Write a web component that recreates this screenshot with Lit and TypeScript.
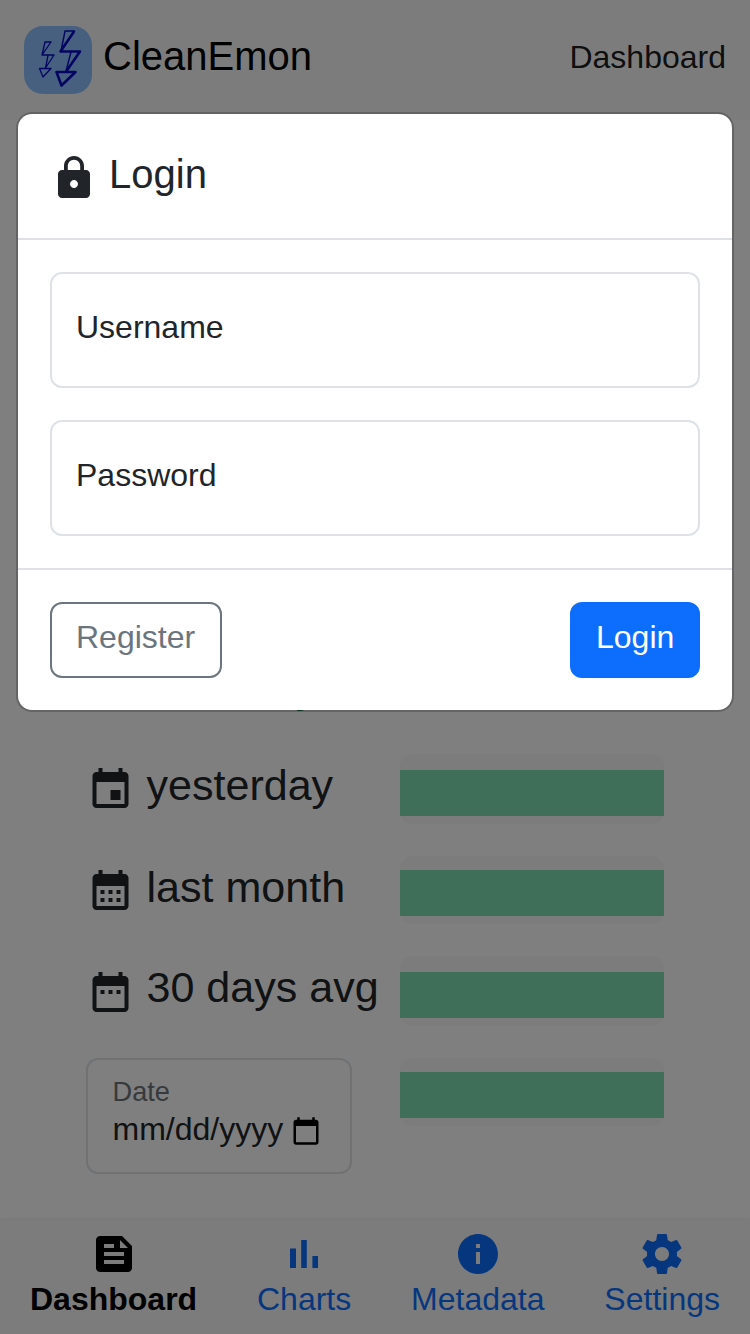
import { LitElement, html, css, svg } from "lit";
import { customElement } from "lit/decorators.js";

const ICONS: Record<string, string> = {
  lock: "M18 8h-1V6c0-2.76-2.24-5-5-5S7 3.24 7 6v2H6c-1.1 0-2 .9-2 2v10c0 1.1.9 2 2 2h12c1.1 0 2-.9 2-2V10c0-1.1-.9-2-2-2zm-6 9c-1.1 0-2-.9-2-2s.9-2 2-2 2 .9 2 2-.9 2-2 2zm3.1-9H8.900V6c0-1.710 1.390-3.100 3.100-3.100 1.710 0 3.100 1.390 3.100 3.100v2z",
  yesterday: "M17 12h-5v5h5v-5zM16 1v2H8V1H6v2H5c-1.110 0-1.990.9-1.990 2L3 19c0 1.100.89 2 2 2h14c1.100 0 2-.9 2-2V5c0-1.100-.9-2-2-2h-1V1h-2zm3 18H5V8h14v11z",
  month: "M19 4h-1V2h-2v2H8V2H6v2H5c-1.110 0-1.990.9-1.990 2L3 20c0 1.100.89 2 2 2h14c1.100 0 2-.9 2-2V6c0-1.100-.9-2-2-2zm0 16H5V10h14v10zM9 14H7v-2h2v2zm4 0h-2v-2h2v2zm4 0h-2v-2h2v2zm-8 4H7v-2h2v2zm4 0h-2v-2h2v2zm4 0h-2v-2h2v2z",
  range: "M9 11H7v2h2v-2zm4 0h-2v2h2v-2zm4 0h-2v2h2v-2zm2-7h-1V2h-2v2H8V2H6v2H5c-1.110 0-1.990.9-1.990 2L3 20c0 1.100.89 2 2 2h14c1.100 0 2-.9 2-2V6c0-1.100-.9-2-2-2zm0 16H5V9h14v11z",
  picker: "M20 3h-1V1h-2v2H7V1H5v2H4c-1.100 0-2 .9-2 2v16c0 1.100.9 2 2 2h16c1.100 0 2-.9 2-2V5c0-1.100-.9-2-2-2zm0 18H4V8h16v13z",
  feed: "M16 3H5c-1.100 0-2 .9-2 2v14c0 1.100.9 2 2 2h14c1.100 0 2-.9 2-2V8l-5-5zM7 7h5v2H7V7zm10 10H7v-2h10v2zm0-4H7v-2h10v2zm-2-4V5l4 4h-4z",
  charts: "M5 9.200h3V19H5zM10.600 5h2.800v14h-2.800zm5.600 8H19v6h-2.800z",
  info: "M12 2C6.480 2 2 6.480 2 12s4.480 10 10 10 10-4.480 10-10S17.520 2 12 2zm1 15h-2v-6h2v6zm0-8h-2V7h2v2z",
  settings: "M19.430 12.980c.04-.32.07-.64.07-.98s-.03-.66-.07-.98l2.110-1.650c.19-.15.24-.42.12-.64l-2-3.460c-.12-.22-.39-.3-.61-.22l-2.490 1c-.52-.4-1.080-.73-1.690-.98l-.38-2.650C14.460 2.180 14.250 2 14 2h-4c-.25 0-.46.18-.49.42l-.38 2.650c-.61.25-1.170.59-1.690.98l-2.490-1c-.23-.09-.49 0-.61.22l-2 3.460c-.13.22-.07.49.12.64l2.110 1.650c-.04.32-.07.65-.07.98s.03.66.07.98l-2.110 1.650c-.19.15-.24.42-.12.64l2 3.460c.12.22.39.3.61.22l2.490-1c.52.4 1.080.73 1.690.98l.38 2.650c.03.24.24.42.49.42h4c.25 0 .46-.18.49-.42l.38-2.650c.61-.25 1.170-.59 1.690-.98l2.490 1c.23.09.49 0 .61-.22l2-3.460c.12-.22.07-.49-.12-.64l-2.110-1.650zM12 15.500c-1.930 0-3.500-1.570-3.500-3.500s1.570-3.500 3.500-3.500 3.500 1.570 3.500 3.500-1.570 3.500-3.500 3.500z",
};

const icon = (name: string, cls = "") =>
  html`<svg class="icon ${cls}" viewBox="0 0 24 24" fill="currentColor" aria-hidden="true">${svg`<path fill-rule="evenodd" d=${ICONS[name]}></path>`}</svg>`;

const PERIODS = [
  { name: "yesterday", icon: "yesterday", cls: "r1" },
  { name: "last month", icon: "month", cls: "r2" },
  { name: "30 days avg", icon: "range", cls: "r3" },
];

const TABS = [
  { name: "Dashboard", icon: "feed", cls: "active" },
  { name: "Charts", icon: "charts", cls: "" },
  { name: "Metadata", icon: "info", cls: "" },
  { name: "Settings", icon: "settings", cls: "" },
];

@customElement("app-root")
export class AppRoot extends LitElement {
  static styles = css`
    :host {
      display: block;
      position: relative;
      height: 1334px;
      overflow: hidden;
      background: #fff;
      color: #212529;
      font: 32px/48px "Liberation Sans", Arial, sans-serif;
    }
    * { box-sizing: border-box; }
    .icon { display: block; width: 48px; height: 48px; flex: none; }
    .page { height: 100%; display: flex; flex-direction: column; }
    .top {
      height: 120px; flex: none;
      display: flex; align-items: center;
      padding: 0 24px;
      background: #f8f9fa;
      color: rgba(0, 0, 0, 0.9);
    }
    .logo { width: 68px; height: 68px; flex: none; display: block; }
    .brand { font-size: 40px; line-height: 60px; margin: -8px auto 0 11px; color: #000; }
    .crumb { margin-top: -6px; }
    .content {
      flex: 1; display: flex; flex-direction: column;
      padding: 536px 86px 0;
      font-size: 43.05px;
    }
    .today {
      height: 98px; padding-left: 108px; white-space: nowrap;
      color: #198754; line-height: 52px; font-size: 52px;
    }
    .row { height: 101px; display: flex; flex: none; }
    .label { width: 314px; display: flex; white-space: nowrap; line-height: 62px; }
    .label.r2 { line-height: 64px; }
    .label .icon { width: 49px; height: 48px; margin: 12px 11.500px 0 0; }
    .label.r2 .icon { margin-top: 12px; }
    .slot {
      width: 264px; height: 70px; border-radius: 12px;
      background: #f8f9fa; padding-top: 16px;
    }
    .slot.r2 { height: 68px; margin-top: 1px; padding-top: 14px; }
    .label.r2 .icon { margin-top: 11px; }
    .slot.r4 { padding-top: 14px; height: 68px; margin-top: 1px; }
    .bar { height: 46px; background: #7fdfb0; }
    .date {
      width: 266px; height: 116px; margin: 1px 48px 0 0;
      border: 2px solid #dee2e6; border-radius: 12px;
      padding: 12px 24px 12px 24.500px; font-size: 32px; line-height: 40px;
    }
    .date .small { font-size: 27.2px; line-height: 40px; color: #6f7479; }
    .value { display: flex; align-items: center; height: 36px; margin-top: -1px; white-space: nowrap; }
    .value .icon { width: 30px; height: 30px; margin: 4px 0 0 7.500px; color: #000; }
    .tabs {
      height: 114px; flex: none;
      display: flex; justify-content: space-between;
      padding: 10px 30px 0 30px;
      background: #f8f9fa;
      box-shadow: 0 0 4px rgba(0, 0, 0, 0.12);
      color: #0d6efd;
    }
    .tab { display: flex; flex-direction: column; align-items: center; line-height: 42px; }
    .tab.active { color: #000; font-weight: 700; }
    .backdrop {
      position: absolute; inset: 0;
      background: rgba(0, 0, 0, 0.5);
      padding: 112px 16px 0;
    }
    .modal {
      width: 718px; height: 600px;
      border: 2px solid rgba(0, 0, 0, 0.2);
      border-radius: 16px;
      background: #fff; background-clip: padding-box;
    }
    .head {
      height: 126px; border-bottom: 2px solid #dee2e6;
      padding: 30px 32px 0; display: flex;
      font-size: 40px; line-height: 60px;
    }
    .head .icon { margin: 10px 11px 0 0; }
    .fields { padding: 32px; display: flex; flex-direction: column; gap: 32px; }
    .field {
      height: 116px; border: 2px solid #dee2e6; border-radius: 12px;
      padding: 29px 24px;
    }
    .foot {
      border-top: 2px solid #dee2e6; padding: 32px;
      display: flex; justify-content: space-between;
    }
    .btn {
      height: 76px; border: 2px solid #6c757d; border-radius: 12px;
      padding: 0 24px 6px; background: transparent; text-align: left;
      font: inherit; line-height: 66px; color: #6c757d;
    }
    .btn.outline { width: 172px; }
    .btn.primary { width: 130px; background: #0d6efd; border-color: #0d6efd; color: #fff; }
  `;

  render() {
    return html`
      <div class="page">
        <header class="top">
          <svg class="logo" viewBox="0 0 68 68" aria-hidden="true">
            <rect width="68" height="68" rx="19" fill="#8fc1ff"></rect>
            <g fill="none" stroke="#0909c4" stroke-linejoin="round" stroke-linecap="round">
              <path stroke-width="1.400" d="M50 5H41L37 25M47 26L42 45"></path>
              <path stroke-width="2.600" d="M50 5.500L36.500 25.500H56L42.500 45"></path>
              <path stroke-width="2.600" d="M32.500 46H51.500L37.500 59.500Z"></path>
              <path stroke-width="1.300" d="M21 16H27L18 29H30L21.500 42L24 29.500M21 16L18 29M15.500 42.500H27L19 51Z"></path>
            </g>
          </svg>
          <span class="brand">CleanEmon</span>
          <span class="crumb">Dashboard</span>
        </header>
        <main class="content">
          <div class="today">today</div>
          ${PERIODS.map((p) => html`
            <div class="row">
              <div class="label ${p.cls}">${icon(p.icon)}<span>${p.name}</span></div>
              <div class="slot ${p.cls}"><div class="bar"></div></div>
            </div>`)}
          <div class="row">
            <div class="date">
              <div class="small">Date</div>
              <div class="value"><span>mm/dd/yyyy</span>${icon("picker")}</div>
            </div>
            <div class="slot r4"><div class="bar"></div></div>
          </div>
        </main>
        <nav class="tabs">
          ${TABS.map((t) => html`<div class="tab ${t.cls}">${icon(t.icon)}<span>${t.name}</span></div>`)}
        </nav>
      </div>
      <div class="backdrop">
        <section class="modal">
          <div class="head">${icon("lock")}<span>Login</span></div>
          <div class="fields">
            <div class="field">Username</div>
            <div class="field">Password</div>
          </div>
          <div class="foot">
            <button class="btn outline">Register</button>
            <button class="btn primary">Login</button>
          </div>
        </section>
      </div>
    `;
  }
}
